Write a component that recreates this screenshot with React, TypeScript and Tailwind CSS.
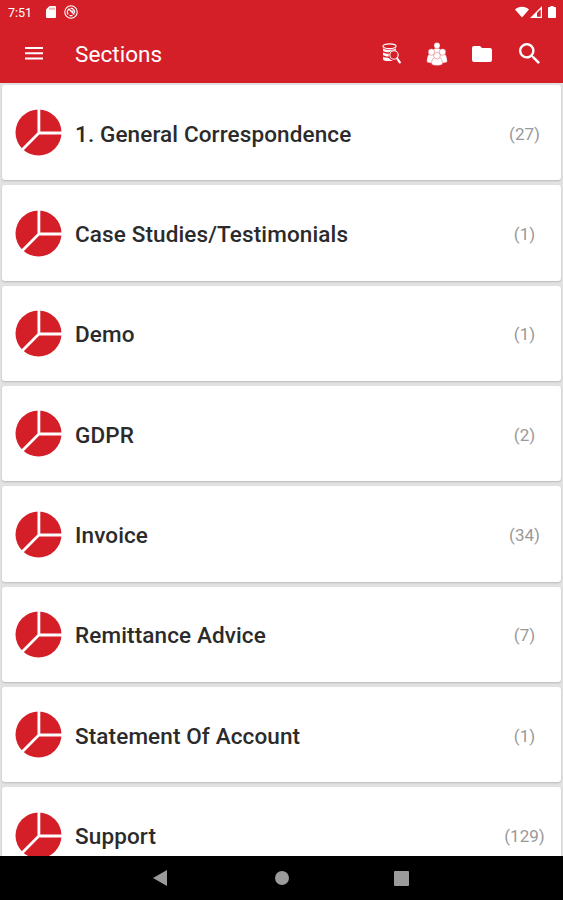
const sections = [
  { name: "1. General Correspondence", count: 27 },
  { name: "Case Studies/Testimonials", count: 1 },
  { name: "Demo", count: 1 },
  { name: "GDPR", count: 2 },
  { name: "Invoice", count: 34 },
  { name: "Remittance Advice", count: 7 },
  { name: "Statement Of Account", count: 1 },
  { name: "Support", count: 129 },
];

function PieIcon() {
  return (
    <svg className="ml-[13px] h-[47px] w-[47px] shrink-0" viewBox="0 0 47 47">
      <circle cx="23.5" cy="23.5" r="23" fill="#d41f29" />
      <path d="M23.900 0V24L7 41M23.900 24H47" fill="none" stroke="#fff" strokeWidth="2.8" />
    </svg>
  );
}

function StatusBar() {
  return (
    <div className="flex h-6 items-center text-white">
      <span className="ml-2 w-[38px] pt-px text-[12.5px] leading-6">7:51</span>
      <svg className="h-3 w-[10px]" viewBox="0 0 10 12" fill="currentColor">
        <path d="M3.5 0H9a1 1 0 0 1 1 1v10a1 1 0 0 1-1 1H1a1 1 0 0 1-1-1V3.5z" />
        <path d="M4 1.7v2M6 1.7v2M8 1.7v2" stroke="#d41f29" strokeWidth=".7" />
      </svg>
      <svg className="ml-2 h-[14px] w-[14px]" viewBox="0 0 14 14" fill="none" stroke="currentColor">
        <circle cx="7" cy="7" r="6.2" strokeWidth="1.1" />
        <path d="M4.200 9.300A3.600 3.600 0 0 1 5 4l5.300 5.500M6.500 3.500A3.600 3.600 0 0 1 10.500 8M5.500 10.400a3.600 3.600 0 0 0 3 0M6.500 6.200h2.300v2.300" strokeWidth="1.2" />
      </svg>
      <svg className="ml-auto h-3 w-[14px]" viewBox="0 0 15 12" fill="currentColor">
        <path d="M0 3.3C4-.6 11-.6 15 3.3L7.5 12z" />
      </svg>
      <svg className="ml-[1px] h-3 w-[12px]" viewBox="0 0 12 12" fill="currentColor">
        <path fillRule="evenodd" d="M12 0v12H0zM10.700 3.200L7 6.900v3.900h3.700z" />
      </svg>
      <svg className="mr-[7px] ml-[6px] h-3 w-2" viewBox="0 0 8 12" fill="currentColor">
        <path d="M2.5 0h3v1H7a1 1 0 0 1 1 1v9a1 1 0 0 1-1 1H1a1 1 0 0 1-1-1V2a1 1 0 0 1 1-1h1.5z" />
      </svg>
    </div>
  );
}

function DatabaseSearchIcon() {
  return (
    <svg className="h-[21px] w-[19px]" viewBox="0 0 19 21" fill="none" stroke="#fff">
      <ellipse cx="7.500" cy="3.200" rx="6.500" ry="2.400" strokeWidth="1.300" />
      <path d="M1 5.200c2 2.200 11 2.200 13 0v2.300c-3.500-.6-5.500.6-6.500 1.800C4.500 9.300 1.800 8.700 1 7.700z" fill="#fff" stroke="none" />
      <path d="M1 9.400c1.400.9 3.500 1.300 5.800 1.300l-.2 2.900C4 13.600 1.700 13 1 12.100zM1 13.800c1.600.8 3.700 1.100 6 1.100.8 1.500 2.200 2.300 4 2.500-3 1.200-9.200.8-10-1z" fill="#fff" stroke="none" />
      <circle cx="12" cy="12" r="4.200" strokeWidth="1.100" />
      <path d="M15.200 15.500l2.600 3.900" strokeWidth="2.200" strokeLinecap="round" />
    </svg>
  );
}

function PeopleIcon() {
  return (
    <svg className="h-6 w-[22px]" viewBox="0 0 22 24" fill="#fff" stroke="#d41f29" strokeWidth=".35">
      <path d="M6.500 13c0-4.500 1-7 4.500-7s4.500 2.500 4.500 7z" />
      <circle cx="11" cy="3.600" r="3.100" />
      <path d="M.8 20c0-6 1.500-8.500 5-8.500s5 2.500 5 8.500c-2 1.500-8 1.500-10 0z" />
      <circle cx="5.500" cy="10" r="3.300" />
      <path d="M21.200 20c0-6-1.500-8.500-5-8.500s-5 2.500-5 8.500c2 1.500 8 1.500 10 0z" />
      <circle cx="16.500" cy="10" r="3.300" />
      <path d="M5.500 22.300c0-5 2-7.300 5.500-7.300s5.500 2.300 5.500 7.300c-2.500 1.700-8.500 1.700-11 0z" />
      <circle cx="11" cy="13.700" r="3.300" />
    </svg>
  );
}

function Toolbar() {
  return (
    <div className="flex h-[59px] items-center text-white">
      <svg className="ml-[25px] h-[13px] w-[18px]" viewBox="0 0 18 13" fill="currentColor">
        <path d="M0 0h18v2H0zM0 5.300h18v2H0zM0 10.600h18v2H0z" />
      </svg>
      <h1 className="ml-[32px] pt-px text-[22.500px] leading-7 tracking-[0.060px] whitespace-nowrap">Sections</h1>
      <div className="ml-auto flex items-center">
        <DatabaseSearchIcon />
        <div className="ml-[25px]"><PeopleIcon /></div>
        <svg className="ml-[24px] h-[16px] w-5" viewBox="0 0 20 17" preserveAspectRatio="none" fill="currentColor">
          <path d="M2 0h6l2 2.200h8a2 2 0 0 1 2 2V15a2 2 0 0 1-2 2H2a2 2 0 0 1-2-2V2a2 2 0 0 1 2-2z" />
        </svg>
        <svg className="mr-[23px] ml-[27px] h-[21px] w-[21px]" viewBox="3 3 17.500 17.500" fill="currentColor">
          <path d="M15.500 14h-.79l-.28-.27A6.470 6.470 0 0 0 16 9.500 6.500 6.500 0 1 0 9.500 16c1.610 0 3.090-.59 4.230-1.570l.27.28v.79l5 4.990L20.490 19zm-6 0C7.010 14 5 11.990 5 9.500S7.010 5 9.500 5 14 7.010 14 9.500 11.990 14 9.500 14z" />
        </svg>
      </div>
    </div>
  );
}

export default function App() {
  return (
    <div className="flex h-[900px] w-[563px] flex-col overflow-hidden bg-[#e2e2e2] font-['Roboto',sans-serif]">
      <header className="h-[83px] shrink-0 bg-[#d41f29]">
        <StatusBar />
        <Toolbar />
      </header>
      <main className="flex min-h-0 flex-1 flex-col gap-[5px] overflow-hidden px-[2px] pt-[2px]">
        {sections.map((s) => (
          <div
            key={s.name}
            className="flex h-[95.350px] shrink-0 items-center rounded-[3px] bg-white shadow-[0_1px_2px_rgba(0,0,0,0.18)]"
          >
            <PieIcon />
            <span className="ml-[13px] pt-[2px] text-[22.500px] leading-7 font-medium tracking-[0.120px] whitespace-nowrap text-[#2b2b2b]">{s.name}</span>
            <span className="mr-[5.500px] ml-auto w-[62px] pt-[2px] text-center text-[17px] leading-6 text-[#999]">({s.count})</span>
          </div>
        ))}
      </main>
      <nav className="flex h-[44px] shrink-0 items-center bg-black">
        <svg className="ml-[153px] h-4 w-[14px]" viewBox="0 0 14 16"><path d="M14 0v16L0 8z" fill="#9b9b9b" /></svg>
        <div className="ml-[108px] h-[14px] w-[14px] rounded-full bg-[#9b9b9b]" />
        <div className="ml-[105px] h-[15px] w-[15px] rounded-[1px] bg-[#9b9b9b]" />
      </nav>
    </div>
  );
}
